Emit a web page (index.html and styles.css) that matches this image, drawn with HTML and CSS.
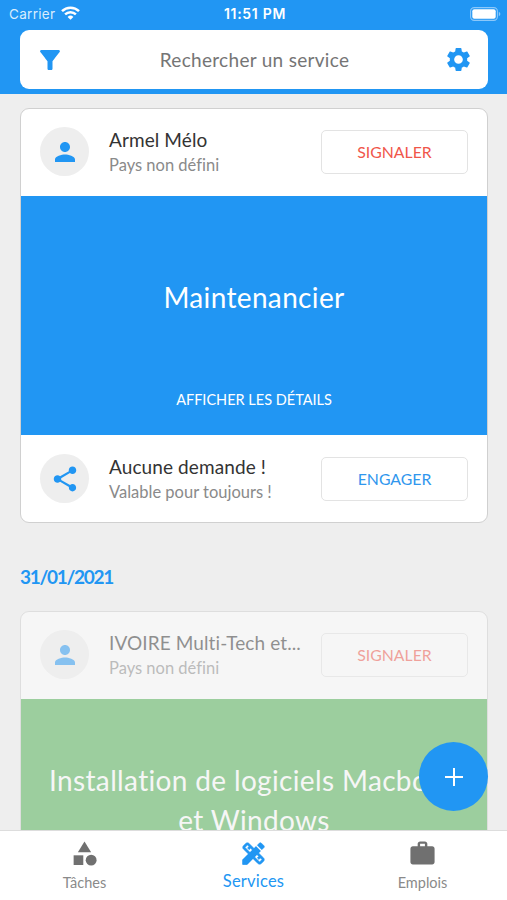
FILE: index.html
```html
<!DOCTYPE html>
<html lang="fr">
<head>
	<meta charset="UTF-8">
	<title>Services</title>
	<link rel="stylesheet" href="styles.css">
</head>
<body>
	<div class="app">
		<div class="header">
			<div class="status">
				<div class="carrier">
					<span>Carrier</span>
					<svg width="19" height="14" viewBox="0 0 19 14" fill="none" stroke="#fff" stroke-width="2.5">
						<path d="M1 5.2a12.2 12.2 0 0 1 17 0"/>
						<path d="M4.1 8.4a7.8 7.8 0 0 1 10.8 0"/>
						<path d="M9.5 13.8L6.6 10.9a4.2 4.2 0 0 1 5.8 0z" fill="#fff" stroke="none"/>
					</svg>
				</div>
				<span class="time">11:51 PM</span>
				<div class="power">
					<svg width="31" height="14" viewBox="0 0 31 14">
						<rect x=".6" y=".6" width="26.8" height="12.8" rx="3.6" fill="none" stroke="#8cc8fa" stroke-width="1.1"/>
						<rect x="2.3" y="2.3" width="23.4" height="9.4" rx="2" fill="#fff"/>
						<path d="M28.8 4.8q1.6.8 1.6 2.2t-1.6 2.2z" fill="#8cc8fa"/>
					</svg>
				</div>
			</div>
			<div class="search">
				<svg width="30" height="30" viewBox="0 0 24 24"><path d="M4.25 5.61C6.27 8.2 10 13 10 13v6c0 .55.45 1 1 1h2c.55 0 1-.45 1-1v-6s3.72-4.8 5.74-7.39c.51-.66.04-1.61-.79-1.61H5.04c-.83 0-1.3.95-.79 1.61z"/></svg>
				<span class="hint">Rechercher un service</span>
				<svg width="29" height="29" viewBox="0 0 24 24"><path d="M19.14 12.94c.04-.3.06-.61.06-.94 0-.32-.02-.64-.07-.94l2.03-1.58c.18-.14.23-.41.12-.61l-1.92-3.32c-.12-.22-.37-.29-.59-.22l-2.39.96c-.5-.38-1.03-.7-1.62-.94l-.36-2.54c-.04-.24-.24-.41-.48-.41h-3.84c-.24 0-.43.17-.47.41l-.36 2.54c-.59.24-1.13.57-1.62.94l-2.39-.96c-.22-.08-.47 0-.59.22L2.74 8.87c-.12.21-.08.47.12.61l2.03 1.58c-.05.3-.09.63-.09.94s.02.64.07.94l-2.03 1.58c-.18.14-.23.41-.12.61l1.92 3.32c.12.22.37.29.59.22l2.39-.96c.5.38 1.03.7 1.62.94l.36 2.54c.05.24.24.41.48.41h3.84c.24 0 .44-.17.47-.41l.36-2.54c.59-.24 1.13-.56 1.62-.94l2.39.96c.22.08.47 0 .59-.22l1.92-3.32c.12-.22.07-.47-.12-.61l-2.01-1.58zM12 15.6c-1.98 0-3.6-1.62-3.6-3.6s1.62-3.6 3.6-3.6 3.6 1.62 3.6 3.6-1.62 3.6-3.6 3.6z"/></svg>
			</div>
		</div>

		<div class="list">
			<div class="card">
				<div class="row top">
					<div class="avatar">
						<svg width="30" height="30" viewBox="0 0 24 24"><path d="M12 12c2.21 0 4-1.79 4-4s-1.79-4-4-4-4 1.79-4 4 1.79 4 4 4zm0 2c-2.67 0-8 1.34-8 4v2h16v-2c0-2.66-5.33-4-8-4z"/></svg>
					</div>
					<div class="info">
						<p class="name">Armel Mélo</p>
						<p class="sub">Pays non défini</p>
					</div>
					<div class="btn red">SIGNALER</div>
				</div>
				<div class="banner">
					<p class="title">Maintenancier</p>
					<p class="details">AFFICHER LES DÉTAILS</p>
				</div>
				<div class="row">
					<div class="avatar">
						<svg width="30" height="30" viewBox="0 0 24 24"><path d="M18 16.08c-.76 0-1.44.3-1.96.77L8.91 12.7c.05-.23.09-.46.09-.7s-.04-.47-.09-.7l7.05-4.11c.54.5 1.25.81 2.04.81 1.66 0 3-1.34 3-3s-1.34-3-3-3-3 1.34-3 3c0 .24.04.47.09.7L8.04 9.81C7.5 9.31 6.79 9 6 9c-1.66 0-3 1.34-3 3s1.34 3 3 3c.79 0 1.5-.31 2.04-.81l7.12 4.16c-.05.21-.08.43-.08.65 0 1.61 1.31 2.92 2.92 2.92s2.92-1.31 2.92-2.92-1.31-2.92-2.92-2.92z"/></svg>
					</div>
					<div class="info">
						<p class="name">Aucune demande !</p>
						<p class="sub">Valable pour toujours !</p>
					</div>
					<div class="btn blue">ENGAGER</div>
				</div>
			</div>

			<p class="date">31/01/2021</p>

			<div class="card old">
				<div class="row top">
					<div class="avatar">
						<svg width="30" height="30" viewBox="0 0 24 24"><path d="M12 12c2.21 0 4-1.79 4-4s-1.79-4-4-4-4 1.79-4 4 1.79 4 4 4zm0 2c-2.67 0-8 1.34-8 4v2h16v-2c0-2.66-5.33-4-8-4z"/></svg>
					</div>
					<div class="info">
						<p class="name">IVOIRE Multi-Tech et...</p>
						<p class="sub">Pays non défini</p>
					</div>
					<div class="btn red">SIGNALER</div>
				</div>
				<div class="banner green">
					<p class="title">Installation de logiciels Macbook<br>et Windows</p>
				</div>
			</div>
		</div>

		<div class="add">
			<svg width="18" height="18" viewBox="0 0 18 18" stroke="#fff" stroke-width="2"><path d="M9 0v18M0 9h18"/></svg>
		</div>

		<div class="tabs">
			<div class="tab">
				<svg width="29" height="29" viewBox="0 0 24 24"><path d="M12 2l-5.5 9h11z"/><circle cx="17.5" cy="17.5" r="4.5"/><path d="M3 13.5h8v8H3z"/></svg>
				<span>Tâches</span>
			</div>
			<div class="tab current">
				<svg width="29" height="29" viewBox="0 0 24 24"><path d="M3 17.25V21h3.75L17.81 9.94l-3.75-3.75z"/><path stroke="#2196f3" stroke-width=".4" d="M16.24 11.51l1.57-1.57-3.75-3.75-1.57 1.57-4.14-4.13c-.78-.78-2.05-.78-2.83 0l-1.9 1.9c-.78.78-.78 2.05 0 2.83l4.13 4.13L3 17.25V21h3.75l4.76-4.76 4.13 4.13c.95.95 2.23.6 2.83 0l1.9-1.9c.78-.78.78-2.05 0-2.83l-4.13-4.13zm-7.06-.44L5.04 6.94l1.89-1.9L8.2 6.31 7.02 7.5l1.41 1.41 1.19-1.19 1.45 1.45-1.89 1.9zm7.88 7.89l-4.13-4.13 1.9-1.9 1.45 1.45-1.19 1.19 1.41 1.41 1.19-1.19 1.27 1.27-1.9 1.9zM20.71 7.04c.39-.39.39-1.02 0-1.41l-2.34-2.34c-.47-.47-1.12-.29-1.41 0l-1.83 1.83 3.75 3.75 1.83-1.83z"/></svg>
				<span>Services</span>
			</div>
			<div class="tab">
				<svg width="29" height="29" viewBox="0 0 24 24"><path d="M20 6h-4V4c0-1.11-.89-2-2-2h-4c-1.11 0-2 .89-2 2v2H4c-1.11 0-1.99.89-1.99 2L2 19c0 1.11.89 2 2 2h16c1.11 0 2-.89 2-2V8c0-1.11-.89-2-2-2zm-6 0h-4V4h4v2z"/></svg>
				<span>Emplois</span>
			</div>
		</div>
	</div>
</body>
</html>
```
FILE: styles.css
```css
*{
	margin: 0;
	padding: 0;
	box-sizing: border-box;
}
body{
	font-family: Lato, "Liberation Sans", sans-serif;
	font-variant-ligatures: none;
	background-color: #eee;
}
svg{
	display: block;
	flex: none;
}
.app{
	position: relative;
	display: flex;
	flex-direction: column;
	height: 900px;
	overflow: hidden;
}

/* header */
.header{
	flex: none;
	height: 94px;
	padding: 0 19px 0 20px;
	background-color: #2196f3;
}
.status{
	display: flex;
	align-items: center;
	height: 30px;
	margin: 0 -13px 0 -11px;
	padding-bottom: 3px;
	color: #fff;
	font: 13.5px/20px Inter, sans-serif;
}
.carrier, .power{
	flex: 1;
	display: flex;
	gap: 6px;
}
.carrier{
	color: #d8edfd;
	letter-spacing: .3px;
}
.carrier svg{
	margin-top: 2px;
}
.power{
	justify-content: flex-end;
}
.time{
	font-size: 14px;
	font-weight: 600;
	letter-spacing: .7px;
}
.search{
	display: flex;
	align-items: center;
	justify-content: space-between;
	height: 59px;
	padding: 0 15px;
	border-radius: 9px;
	background-color: #fff;
	fill: #2196f3;
}
.hint{
	font-size: 19px;
	letter-spacing: .3px;
	color: #757575;
}

/* cards */
.list{
	flex: 1;
	min-height: 0;
	overflow: hidden;
	padding: 14px 19px 0 20px;
}
.card{
	border: 1px solid #d0d0d0;
	border-radius: 9px;
	background-color: #fff;
	overflow: hidden;
}
.row{
	display: flex;
	align-items: center;
	height: 87px;
	padding: 0 19px;
}
.top{
	padding-bottom: 2px;
}
.avatar{
	display: flex;
	align-items: center;
	justify-content: center;
	width: 49px;
	height: 49px;
	border-radius: 50%;
	background-color: #eee;
	fill: #2196f3;
}
.info{
	flex: 1;
	padding: 2px 0 0 20px;
	white-space: nowrap;
}
.name{
	font-size: 19px;
	line-height: 26px;
	letter-spacing: .1px;
	color: #333;
}
.sub{
	font-size: 16.5px;
	line-height: 25px;
	color: #8a8a8a;
}
.btn{
	width: 147px;
	height: 44px;
	border: 1px solid #e3e3e3;
	border-radius: 5px;
	text-align: center;
	font-size: 15.8px;
	line-height: 42px;
}
.red{
	color: #f0564a;
}
.blue{
	color: #3097ee;
}
.banner{
	display: flex;
	flex-direction: column;
	height: 239px;
	padding-top: 81px;
	background-color: #2196f3;
	color: #fff;
	text-align: center;
}
.title{
	font-size: 28px;
	line-height: 40px;
	letter-spacing: .35px;
}
.details{
	margin-top: 73px;
	font-size: 14.5px;
	line-height: 20px;
}
.date{
	margin: 40px 0 20px;
	font-size: 19px;
	line-height: 28px;
	font-weight: 700;
	letter-spacing: -1.3px;
	color: #2196f3;
}
.old{
	opacity: .5;
}
.green{
	padding-top: 61px;
	background-color: #4caf50;
}

/* floating button */
.add{
	position: absolute;
	right: 19px;
	bottom: 89px;
	display: flex;
	align-items: center;
	justify-content: center;
	width: 69px;
	height: 69px;
	border-radius: 50%;
	background-color: #2196f3;
}

/* bottom tabs */
.tabs{
	flex: none;
	display: flex;
	height: 70px;
	border-top: 1px solid #ddd;
	background-color: #fff;
}
.tab{
	flex: 1;
	display: flex;
	flex-direction: column;
	align-items: center;
	padding-top: 8px;
	font-size: 14.5px;
	line-height: 29px;
	color: #8a8a8a;
	fill: #707070;
}
.current{
	font-size: 16.5px;
	line-height: 27px;
	letter-spacing: .2px;
	color: #2196f3;
	fill: #2196f3;
}
```
